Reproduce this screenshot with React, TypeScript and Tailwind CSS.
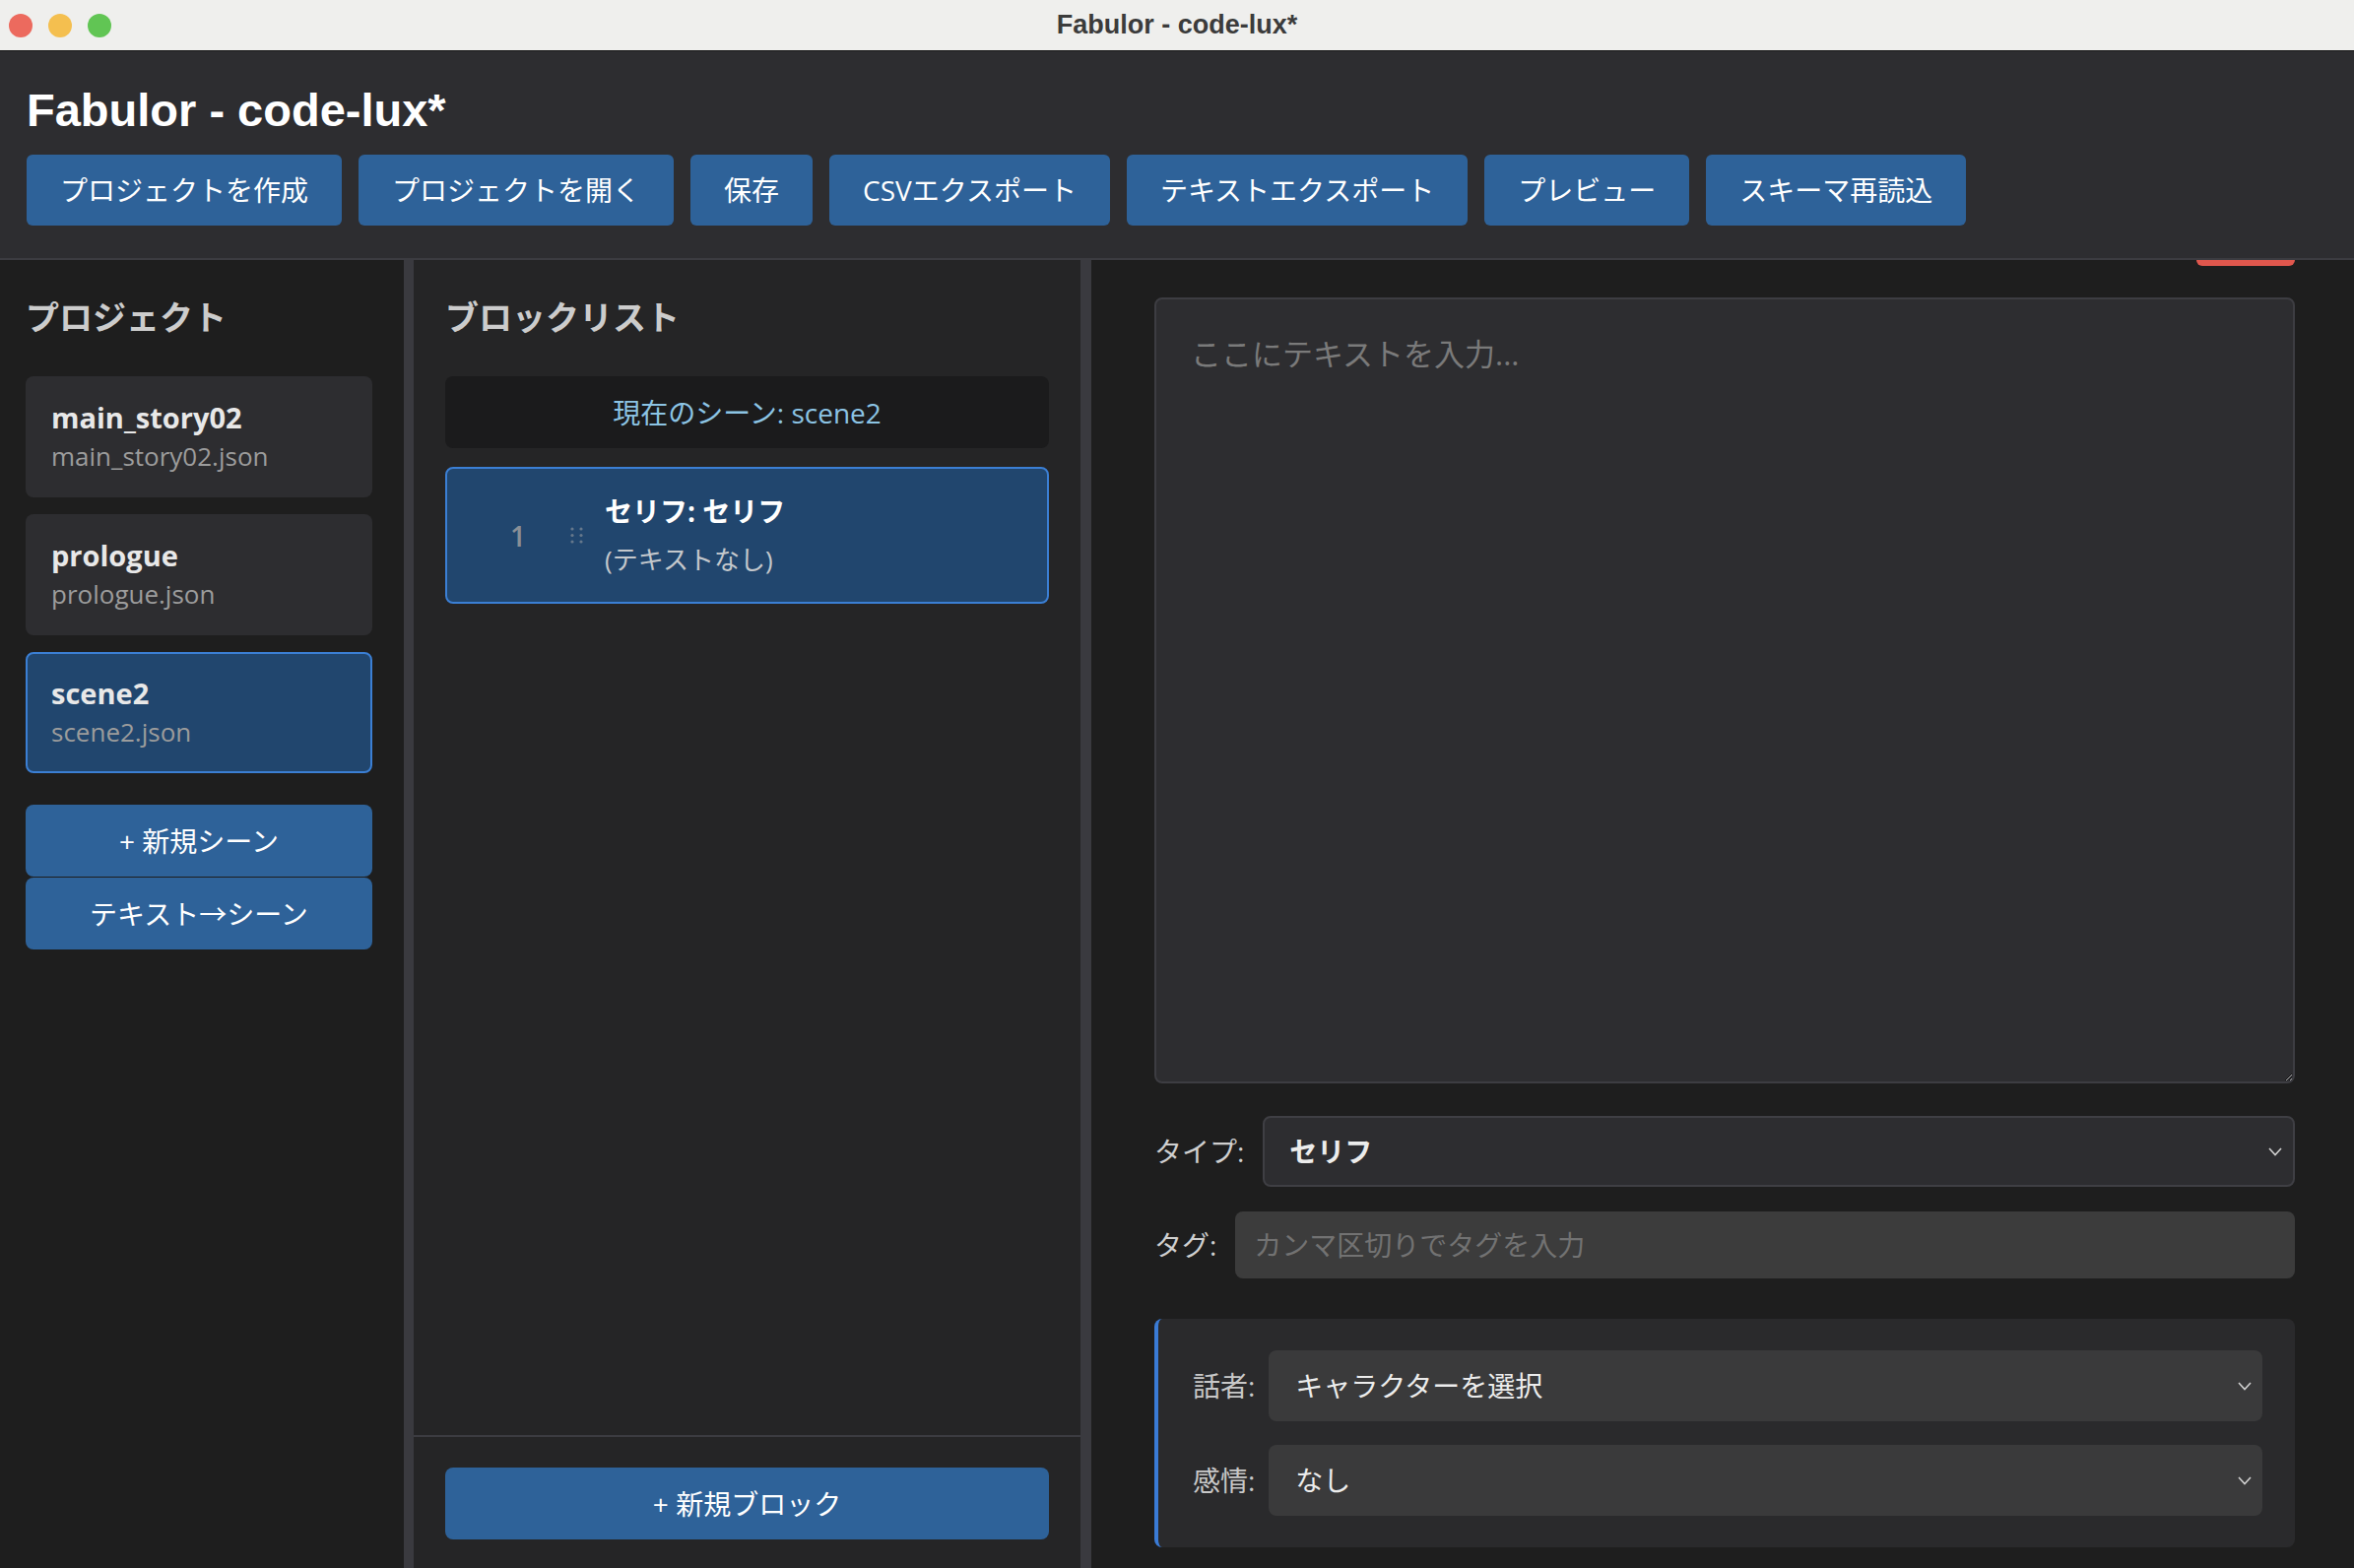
import React from 'react';

const headerButtons = [
  'プロジェクトを作成',
  'プロジェクトを開く',
  '保存',
  'CSVエクスポート',
  'テキストエクスポート',
  'プレビュー',
  'スキーマ再読込',
];

const scenes = [
  { name: 'main_story02', file: 'main_story02.json', active: false },
  { name: 'prologue', file: 'prologue.json', active: false },
  { name: 'scene2', file: 'scene2.json', active: true },
];

function Chevron() {
  return (
    <svg width="14" height="9" viewBox="0 0 14 9" className="shrink-0">
      <polyline points="1,1 7,7.5 13,1" fill="none" stroke="#d0d0d0" strokeWidth="1.6" />
    </svg>
  );
}

function DragDots() {
  return (
    <svg width="13" height="17" viewBox="0 0 13 17" className="shrink-0">
      {[0, 1].map(c =>
        [0, 1, 2].map(r => (
          <circle key={`${c}-${r}`} cx={2 + c * 9} cy={2 + r * 6.5} r="1.6" fill="#66788c" />
        ))
      )}
    </svg>
  );
}

function FakeSelect({ value, bold, className }: { value: string; bold?: boolean; className: string }) {
  return (
    <div className={`flex h-[72px] flex-1 items-center justify-between rounded-[8px] ${className}`}>
      <span className={`text-[28px] text-[#ececec] ${bold ? 'font-bold' : ''}`}>{value}</span>
      <Chevron />
    </div>
  );
}

export default function App() {
  return (
    <div className="flex h-screen w-full flex-col overflow-hidden bg-[#1e1e1e] [font-family:'Open_Sans','Noto_Sans_CJK_JP',sans-serif]">
      {/* window chrome */}
      <div className="grid h-[52px] shrink-0 grid-cols-[1fr_auto_1fr] items-center border-b border-[#161616] bg-[#efefed]">
        <div className="flex gap-[16px] pl-[9px]">
          <div className="h-[24px] w-[24px] rounded-full bg-[#ec6a5e]" />
          <div className="h-[24px] w-[24px] rounded-full bg-[#f4bf4f]" />
          <div className="h-[24px] w-[24px] rounded-full bg-[#61c554]" />
        </div>
        <div className="text-[27px] font-bold text-[#3b3b3b] [font-family:'Liberation_Sans',sans-serif]">
          Fabulor - code-lux*
        </div>
        <div />
      </div>

      {/* app header */}
      <div className="shrink-0 border-b-2 border-[#3c3c41] bg-[#2d2d30] px-[27px] pt-[33px] pb-[33px]">
        <h1 className="mb-[19px] text-[47px] leading-[53px] font-bold text-white [font-family:'Liberation_Sans',sans-serif]">
          Fabulor - code-lux*
        </h1>
        <div className="flex gap-[17px]">
          {headerButtons.map(label => (
            <button
              key={label}
              className="h-[72px] rounded-[6px] bg-[#2e6299] px-[34px] text-[28px] text-white"
            >
              {label}
            </button>
          ))}
        </div>
      </div>

      <div className="flex min-h-0 flex-1">
        {/* project sidebar */}
        <div className="w-[410px] shrink-0 bg-[#1e1e1e] pt-[38px] pr-[32px] pl-[26px]">
          <h2 className="mb-[39px] text-[34px] leading-[41px] font-bold text-[#cccccc]">プロジェクト</h2>
          <div className="flex flex-col gap-[17px]">
            {scenes.map(s => (
              <div
                key={s.name}
                className={`flex h-[123px] flex-col justify-center rounded-[8px] border-2 px-[24px] ${
                  s.active ? 'border-[#3b7fd4] bg-[#21466e]' : 'border-transparent bg-[#2d2d30]'
                }`}
              >
                <div className="text-[29px] leading-[38px] font-bold text-[#e8e8e8]">{s.name}</div>
                <div className="text-[26px] leading-[40px] text-[#9c9c9c]">{s.file}</div>
              </div>
            ))}
          </div>
          <div className="mt-[32px] flex flex-col">
            <button className="h-[73px] rounded-[8px] bg-[#2e6299] text-[28px] text-white">+ 新規シーン</button>
            <button className="mt-px h-[73px] rounded-[8px] bg-[#2e6299] text-[28px] text-white">テキスト→シーン</button>
          </div>
        </div>

        <div className="w-[10px] shrink-0 bg-[#3a3a3f]" />

        {/* block list */}
        <div className="flex w-[677px] shrink-0 flex-col bg-[#252526]">
          <div className="flex-1 px-[32px] pt-[38px]">
            <h2 className="mb-[39px] text-[34px] leading-[41px] font-bold text-[#cccccc]">ブロックリスト</h2>
            <div className="flex h-[73px] items-center justify-center rounded-[8px] bg-[#1b1b1c] text-[28px] text-[#8cc4e4]">
              現在のシーン: scene2
            </div>
            <div className="mt-[19px] flex h-[139px] items-center rounded-[8px] border-2 border-[#3b7fd4] bg-[#21466e] pl-[52px]">
              <div className="w-[40px] text-center text-[28px] font-semibold text-[#8a8f96]">1</div>
              <div className="ml-[33px]">
                <DragDots />
              </div>
              <div className="ml-[22px] flex flex-col">
                <div className="text-[28px] leading-[40px] font-bold text-white">セリフ: セリフ</div>
                <div className="mt-[9px] text-[26px] leading-[40px] text-[#c4c8cc]">(テキストなし)</div>
              </div>
            </div>
          </div>
          <div className="border-t-2 border-[#3c3c41] px-[32px] pt-[31px] pb-[29px]">
            <button className="h-[73px] w-full rounded-[8px] bg-[#2e6299] text-[28px] text-white">+ 新規ブロック</button>
          </div>
        </div>

        <div className="w-[11px] shrink-0 bg-[#3a3a3f]" />

        {/* editor */}
        <div className="flex min-w-0 flex-1 flex-col bg-[#1e1e1e] pr-[60px] pl-[64px]">
          <div className="flex justify-end">
            <div className="h-[6px] w-[100px] rounded-b-[6px] bg-[#e0574d]" />
          </div>
          <textarea
            className="mt-[32px] h-[798px] w-full shrink-0 rounded-[8px] border-2 border-[#3d3d42] bg-[#2d2d30] px-[35px] pt-[32px] text-[31px] leading-[46px] text-white outline-none placeholder:text-[#7a7a7a]"
            placeholder="ここにテキストを入力..."
          />

          <div className="mt-[33px] flex items-center gap-[19px]">
            <span className="text-[28px] text-[#cfcfcf]">タイプ:</span>
            <FakeSelect value="セリフ" bold className="border-2 border-[#3f3f44] bg-[#2d2d30] pr-[11px] pl-[25px]" />
          </div>

          <div className="mt-[25px] flex items-center gap-[19px]">
            <span className="text-[28px] text-[#cfcfcf]">タグ:</span>
            <input
              className="h-[68px] flex-1 rounded-[8px] bg-[#3c3c3c] px-[19px] text-[28px] text-white outline-none placeholder:text-[#727272]"
              placeholder="カンマ区切りでタグを入力"
            />
          </div>

          <div className="mt-[41px] flex flex-col gap-[24px] rounded-[8px] border-l-4 border-[#3a7bd5] bg-[#2a2a2c] py-[32px] pr-[33px] pl-[35px]">
            <div className="flex items-center gap-[14px]">
              <span className="text-[28px] text-[#c8c8c8]">話者:</span>
              <FakeSelect value="キャラクターを選択" className="bg-[#3a3a3b] pr-[11px] pl-[27px]" />
            </div>
            <div className="flex items-center gap-[14px]">
              <span className="text-[28px] text-[#c8c8c8]">感情:</span>
              <FakeSelect value="なし" className="bg-[#3a3a3b] pr-[11px] pl-[27px]" />
            </div>
          </div>
        </div>
      </div>
    </div>
  );
}
